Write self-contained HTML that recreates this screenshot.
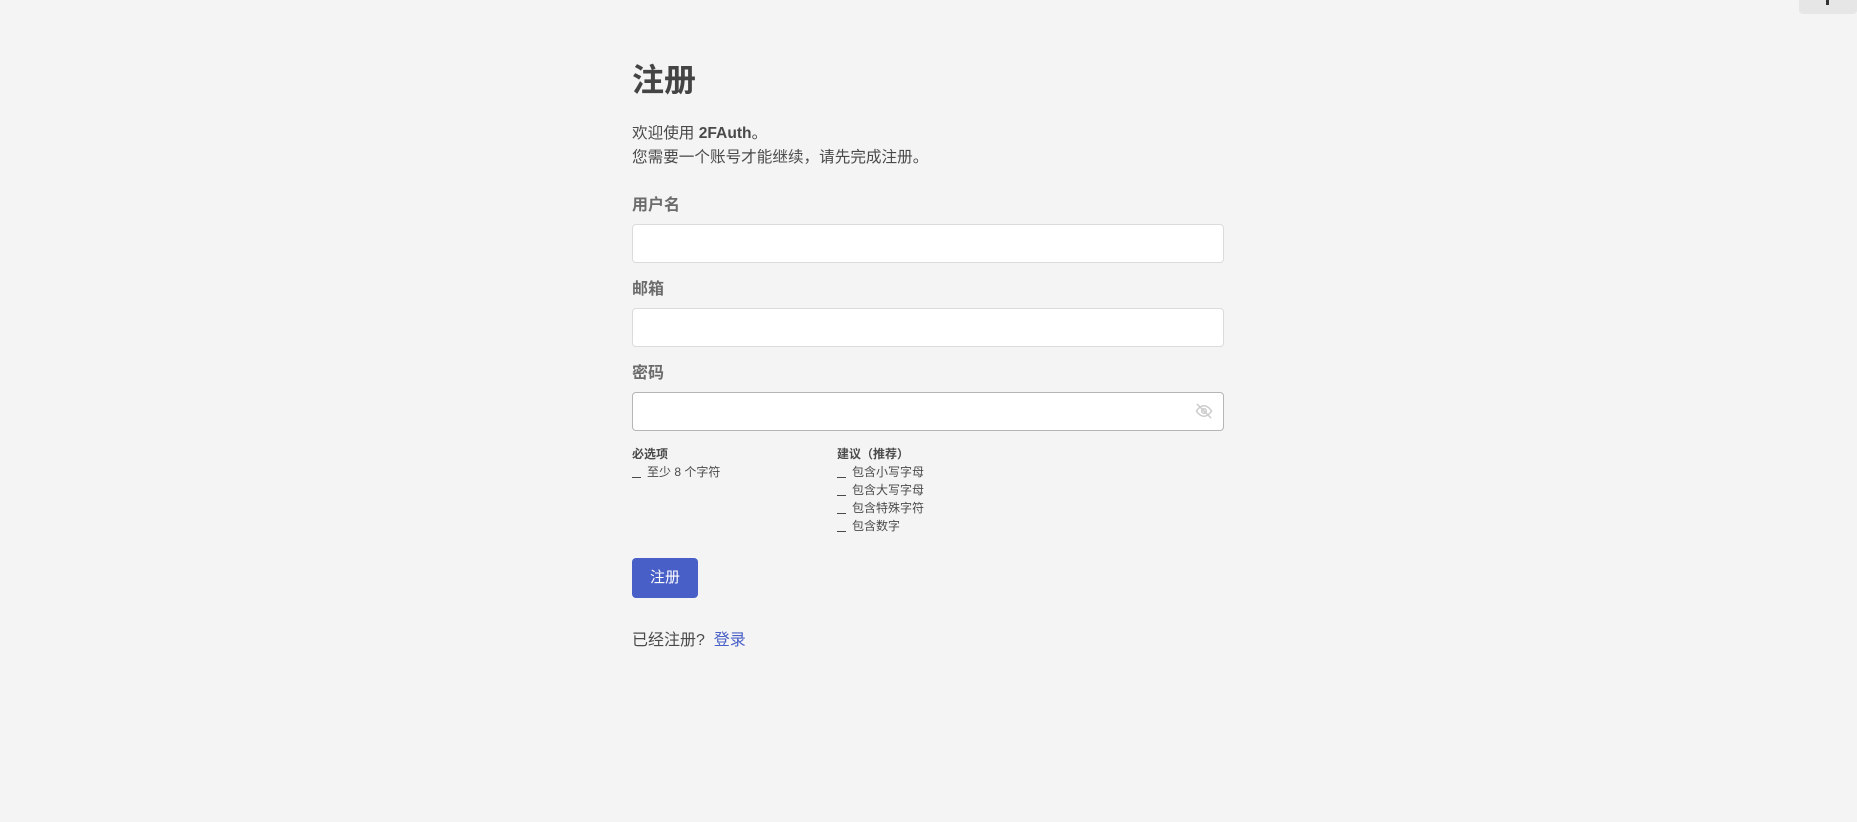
<!DOCTYPE html>
<html><head><meta charset="utf-8"><style>
body{margin:0;background:#f4f4f4;width:1857px;height:822px;position:relative;overflow:hidden;font-family:"Liberation Sans","Noto Sans CJK SC",sans-serif;color:#4a4a4a}
.a{position:absolute;white-space:nowrap}
.in{position:absolute;left:632px;width:590px;height:37px;background:#fff;border:1px solid #dbdbdb;border-radius:4px}
.lab{font-size:16px;color:#6b6b6b;font-weight:600}
.s{font-size:12px;color:#4a4a4a}
.d{display:inline-block;width:9px;border-bottom:1px solid #4a4a4a;margin-right:6px;vertical-align:-2px}
</style></head><body>
<div class="a" style="right:0;top:0;width:58px;height:14px;background:#e6e6e6;border-radius:0 0 4px 4px"><div style="position:absolute;left:27px;top:0;width:3px;height:5px;background:#333"></div></div>
<div class="a" style="left:632px;top:55px;font-size:32px;font-weight:700;color:#444">注册</div>
<div class="a" style="left:632px;top:121px;font-size:15.6px">欢迎使用 <b>2FAuth</b>。</div>
<div class="a" style="left:632px;top:145px;font-size:15.6px">您需要一个账号才能继续，请先完成注册。</div>
<div class="a lab" style="left:632px;top:191px">用户名</div>
<div class="in" style="top:224px"></div>
<div class="a lab" style="left:632px;top:275px">邮箱</div>
<div class="in" style="top:308px"></div>
<div class="a lab" style="left:632px;top:359px">密码</div>
<div class="in" style="top:392px;border-color:#b5b5b5"></div>
<svg class="a" style="left:1194px;top:402px" width="20" height="18" viewBox="0 0 24 24" fill="none" stroke="#ccc" stroke-width="2" stroke-linecap="round"><path d="M2 12s4-7 10-7 10 7 10 7-4 7-10 7S2 12 2 12z"/><circle cx="12" cy="12" r="3"/><path d="M3 3l18 18"/></svg>
<div class="a s" style="left:632px;top:445px;font-weight:700">必选项</div>
<div class="a s" style="left:632px;top:463px"><span class="d"></span>至少 8 个字符</div>
<div class="a s" style="left:837px;top:445px;font-weight:700">建议（推荐）</div>
<div class="a s" style="left:837px;top:463px"><span class="d"></span>包含小写字母</div>
<div class="a s" style="left:837px;top:481px"><span class="d"></span>包含大写字母</div>
<div class="a s" style="left:837px;top:499px"><span class="d"></span>包含特殊字符</div>
<div class="a s" style="left:837px;top:517px"><span class="d"></span>包含数字</div>
<div class="a" style="left:632px;top:558px;width:66px;height:40px;background:#485fc7;border-radius:4px;color:#fff;font-size:15px;line-height:40px;text-align:center">注册</div>
<div class="a" style="left:632px;top:626px;font-size:16px">已经注册? &nbsp;<span style="color:#485fc7">登录</span></div>
</body></html>
